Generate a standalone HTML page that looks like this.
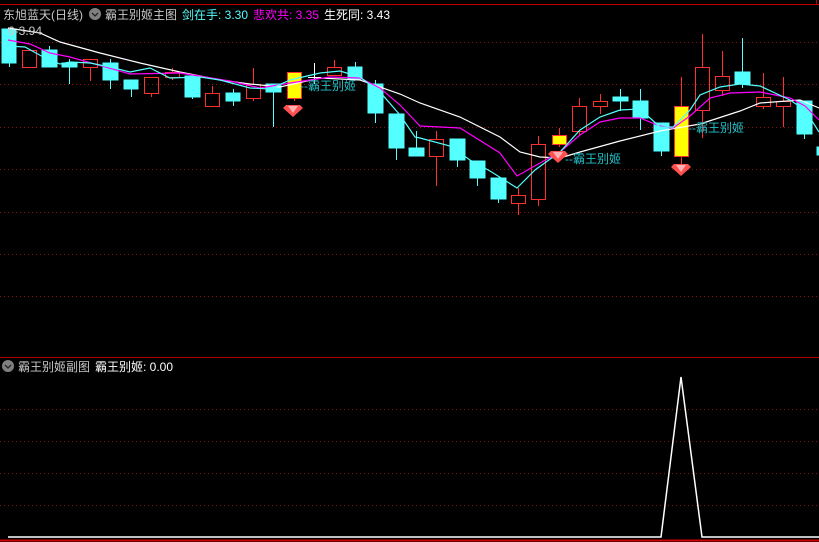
<!DOCTYPE html>
<html><head><meta charset="utf-8"><style>
html,body{margin:0;padding:0;background:#000;width:819px;height:542px;overflow:hidden}
svg{display:block}
text{font-family:"Liberation Sans","Noto Sans CJK SC","WenQuanYi Zen Hei",sans-serif;font-size:12px}
</style></head><body>
<svg width="819" height="542" viewBox="0 0 819 542" xmlns="http://www.w3.org/2000/svg" shape-rendering="crispEdges">
<rect width="819" height="542" fill="#000"/>
<line x1="0" y1="4.5" x2="819" y2="4.5" stroke="#c00000"/>
<line x1="816.5" y1="0" x2="816.5" y2="5" stroke="#c00000"/>
<line x1="0" y1="357.5" x2="819" y2="357.5" stroke="#b00000"/>
<line x1="0" y1="540.5" x2="819" y2="540.5" stroke="#d00000" stroke-width="2"/>
<g stroke="#8a1010" stroke-dasharray="1,3">
<line x1="0" y1="42.5" x2="819" y2="42.5"/>
<line x1="0" y1="84.5" x2="819" y2="84.5"/>
<line x1="0" y1="127.5" x2="819" y2="127.5"/>
<line x1="0" y1="169.5" x2="819" y2="169.5"/>
<line x1="0" y1="212.5" x2="819" y2="212.5"/>
<line x1="0" y1="254.5" x2="819" y2="254.5"/>
<line x1="0" y1="296.5" x2="819" y2="296.5"/>
<line x1="0" y1="409.5" x2="819" y2="409.5"/>
<line x1="0" y1="441.5" x2="819" y2="441.5"/>
<line x1="0" y1="473.5" x2="819" y2="473.5"/>
<line x1="0" y1="505.5" x2="819" y2="505.5"/>
</g>
<g fill="#54ffff" stroke="#54ffff">
<line x1="9.5" y1="60" x2="9.5" y2="67"/><rect x="2" y="29" width="14" height="34"/>
<line x1="49.5" y1="46" x2="49.5" y2="67"/><rect x="42" y="50" width="15" height="17"/>
<line x1="69.5" y1="59" x2="69.5" y2="84"/><rect x="62" y="63" width="15" height="4"/>
<line x1="110.5" y1="59" x2="110.5" y2="89"/><rect x="103" y="63" width="15" height="17"/>
<line x1="131.5" y1="80" x2="131.5" y2="97"/><rect x="124" y="80" width="14" height="9"/>
<line x1="192.5" y1="74" x2="192.5" y2="99"/><rect x="185" y="76" width="15" height="21"/>
<line x1="233.5" y1="89" x2="233.5" y2="106"/><rect x="226" y="93" width="14" height="8"/>
<line x1="273.5" y1="84" x2="273.5" y2="127"/><rect x="266" y="84" width="15" height="8"/>
<line x1="355.5" y1="62" x2="355.5" y2="79"/><rect x="348" y="67" width="14" height="12"/>
<line x1="375.5" y1="80" x2="375.5" y2="123"/><rect x="368" y="84" width="15" height="29"/>
<line x1="396.5" y1="114" x2="396.5" y2="160"/><rect x="389" y="114" width="15" height="34"/>
<line x1="416.5" y1="131" x2="416.5" y2="156"/><rect x="409" y="148" width="15" height="8"/>
<line x1="457.5" y1="139" x2="457.5" y2="167"/><rect x="450" y="139" width="15" height="21"/>
<line x1="477.5" y1="161" x2="477.5" y2="186"/><rect x="470" y="161" width="15" height="17"/>
<line x1="498.5" y1="178" x2="498.5" y2="203"/><rect x="491" y="178" width="15" height="21"/>
<line x1="620.5" y1="89" x2="620.5" y2="111"/><rect x="613" y="97" width="15" height="4"/>
<line x1="640.5" y1="89" x2="640.5" y2="130"/><rect x="633" y="101" width="15" height="17"/>
<line x1="661.5" y1="123" x2="661.5" y2="156"/><rect x="654" y="123" width="15" height="28"/>
<line x1="742.5" y1="38" x2="742.5" y2="88"/><rect x="735" y="72" width="15" height="12"/>
<line x1="804.5" y1="101" x2="804.5" y2="139"/><rect x="797" y="101" width="15" height="33"/>
<rect x="817" y="147" width="3" height="8"/>
</g>
<g fill="none" stroke="#ff3030">
<rect x="22.5" y="50.5" width="14" height="17"/>
<line x1="90.5" y1="67" x2="90.5" y2="81"/><rect x="83.5" y="59.5" width="14" height="8"/>
<line x1="151.5" y1="93" x2="151.5" y2="97"/><rect x="144.5" y="77.5" width="14" height="16"/>
<line x1="172.5" y1="68" x2="172.5" y2="72"/><line x1="172.5" y1="77" x2="172.5" y2="80"/><rect x="165.5" y="72.5" width="14" height="5"/>
<rect x="205.5" y="93.5" width="14" height="13"/><line x1="212.5" y1="86" x2="212.5" y2="93"/>
<line x1="253.5" y1="68" x2="253.5" y2="84"/><line x1="253.5" y1="98" x2="253.5" y2="101"/><rect x="246.5" y="84.5" width="14" height="14"/>
<line x1="334.5" y1="60" x2="334.5" y2="67"/><rect x="327.5" y="67.5" width="14" height="8"/>
<line x1="436.5" y1="131" x2="436.5" y2="139"/><line x1="436.5" y1="156" x2="436.5" y2="186"/><rect x="429.5" y="139.5" width="14" height="17"/>
<line x1="518.5" y1="188" x2="518.5" y2="195"/><line x1="518.5" y1="203" x2="518.5" y2="215"/><rect x="511.5" y="195.5" width="14" height="8"/>
<line x1="538.5" y1="136" x2="538.5" y2="144"/><line x1="538.5" y1="199" x2="538.5" y2="206"/><rect x="531.5" y="144.5" width="14" height="55"/>
<line x1="579.5" y1="98" x2="579.5" y2="106"/><line x1="579.5" y1="131" x2="579.5" y2="135"/><rect x="572.5" y="106.5" width="14" height="25"/>
<line x1="600.5" y1="94" x2="600.5" y2="101"/><line x1="600.5" y1="106" x2="600.5" y2="114"/><rect x="593.5" y="101.5" width="14" height="5"/>
<line x1="702.5" y1="34" x2="702.5" y2="67"/><line x1="702.5" y1="110" x2="702.5" y2="138"/><rect x="695.5" y="67.5" width="14" height="43"/>
<line x1="722.5" y1="51" x2="722.5" y2="76"/><line x1="722.5" y1="90" x2="722.5" y2="96"/><rect x="715.5" y="76.5" width="14" height="14"/>
<line x1="763.5" y1="73" x2="763.5" y2="97"/><line x1="763.5" y1="106" x2="763.5" y2="109"/><rect x="756.5" y="97.5" width="14" height="9"/>
<line x1="783.5" y1="77" x2="783.5" y2="101"/><line x1="783.5" y1="106" x2="783.5" y2="127"/><rect x="776.5" y="101.5" width="14" height="5"/>
</g>
<line x1="294.5" y1="98" x2="294.5" y2="101" stroke="#ff3030"/>
<rect x="287.5" y="72.5" width="14" height="26" fill="#ffff00" stroke="#ff3030"/>
<line x1="559.5" y1="128" x2="559.5" y2="147" stroke="#ff3030"/>
<rect x="552.5" y="135.5" width="14" height="9" fill="#ffff00" stroke="#ff3030"/>
<line x1="681.5" y1="77" x2="681.5" y2="165" stroke="#ff3030"/>
<rect x="674.5" y="106.5" width="14" height="50" fill="#ffff00" stroke="#ff3030"/>
<line x1="314.5" y1="63" x2="314.5" y2="84" stroke="#fff"/>
<line x1="308" y1="77.5" x2="321" y2="77.5" stroke="#fff"/>
<g fill="none" stroke-width="1.2" shape-rendering="auto">
<polyline stroke="#ffffff" points="8,28 40,33 60,42 100,53 140,63 180,72 220,80 250,84 280,87 320,78 360,80 380,87 400,94 420,103 460,117 500,137 520,152 540,157 560,158 580,152 620,141 660,131 700,124 740,111 760,103 800,100 819,108"/>
<polyline stroke="#ff00ff" points="8,40 30,44 50,53 70,57 130,74 180,73 230,81 260,88 290,83 330,77 360,78 380,88 400,105 420,126 460,128 500,153 517,176 540,163 560,152 580,135 600,122 620,118 640,118 660,126 673,128 690,116 710,98 730,93 760,92 790,98 805,106 819,120"/>
<polyline stroke="#54ffff" points="8,46 25,47 45,58 60,64 70,62 90,63 110,67 130,72 150,68 170,78 200,77 220,80 250,88 270,89 290,80 320,73 340,71 360,77 380,92 400,115 415,137 420,138 450,146 470,160 490,171 517,188 535,170 560,152 580,130 600,117 620,110 640,109 660,127 673,127 690,110 700,95 720,87 740,84 760,86 790,100 805,110 819,132"/>
</g>
<g shape-rendering="auto">
<polygon points="286,105 300,105 303,108 293,117 283,108" fill="#ff5050"/>
<polygon points="288,106 298,106 293,113" fill="#ffb0b0"/>
<polygon points="551,151 565,151 568,154 558,163 548,154" fill="#ff5050"/>
<polygon points="553,152 563,152 558,159" fill="#ffb0b0"/>
<polygon points="674,164 688,164 691,167 681,176 671,167" fill="#ff5050"/>
<polygon points="676,165 686,165 681,172" fill="#ffb0b0"/>
</g>
<text x="300" y="90" fill="#1fc0c8">--霸王别姬</text>
<text x="565" y="163" fill="#1fc0c8">--霸王别姬</text>
<text x="688" y="132" fill="#1fc0c8">--霸王别姬</text>
<text x="8" y="35" fill="#c8c8c8" font-size="11">6-3.94</text>
<text x="3" y="19" fill="#c8c8c8">东旭蓝天(日线)</text>
<circle cx="95" cy="14" r="6" fill="#808080" shape-rendering="auto"/>
<polyline points="92,13 95,16 98,13" fill="none" stroke="#222" stroke-width="1.3" shape-rendering="auto"/>
<text x="105" y="19" fill="#c8c8c8">霸王别姬主图</text>
<text x="182" y="19" fill="#54ffff">剑在手: 3.30</text>
<text x="253" y="19" fill="#ff00ff">悲欢共: 3.35</text>
<text x="324" y="19" fill="#ffffff">生死同: 3.43</text>
<circle cx="8" cy="366" r="6" fill="#808080" shape-rendering="auto"/>
<polyline points="5,365 8,368 11,365" fill="none" stroke="#222" stroke-width="1.3" shape-rendering="auto"/>
<text x="18" y="371" fill="#c8c8c8">霸王别姬副图</text>
<text x="95" y="371" fill="#ffffff">霸王别姬: 0.00</text>
<polyline points="8,537 661,537 681,377 702,537 819,537" fill="none" stroke="#fff" stroke-width="1.5" shape-rendering="auto"/>
</svg>
</body></html>
